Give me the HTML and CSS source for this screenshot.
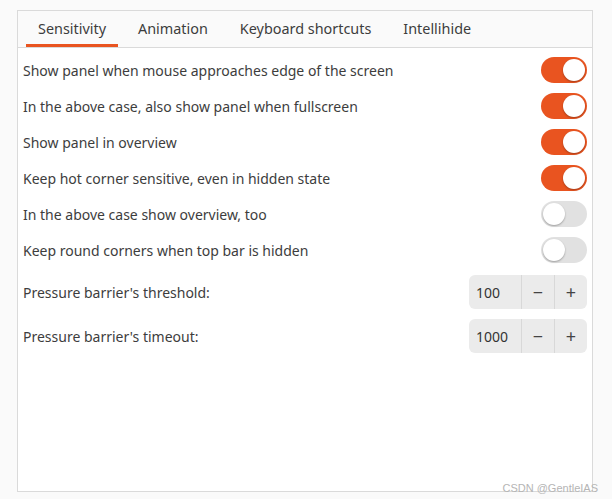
FILE: index.html
```
<!DOCTYPE html>
<html>
<head>
<meta charset="utf-8">
<link rel="stylesheet" href="styles.css">
</head>
<body>
<div class="frame">
  <div class="tabs">
    <div class="tab active">Sensitivity</div>
    <div class="tab">Animation</div>
    <div class="tab">Keyboard shortcuts</div>
    <div class="tab">Intellihide</div>
  </div>
  <div class="content">
    <div class="row"><span class="label">Show panel when mouse approaches edge of the screen</span><span class="switch on"><span class="knob"></span></span></div>
    <div class="row"><span class="label">In the above case, also show panel when fullscreen</span><span class="switch on"><span class="knob"></span></span></div>
    <div class="row"><span class="label">Show panel in overview</span><span class="switch on"><span class="knob"></span></span></div>
    <div class="row"><span class="label">Keep hot corner sensitive, even in hidden state</span><span class="switch on"><span class="knob"></span></span></div>
    <div class="row"><span class="label">In the above case show overview, too</span><span class="switch"><span class="knob"></span></span></div>
    <div class="row"><span class="label">Keep round corners when top bar is hidden</span><span class="switch"><span class="knob"></span></span></div>
    <div class="row spinrow first"><span class="label">Pressure barrier's threshold:</span>
      <div class="spin"><span class="value">100</span><span class="btn">−</span><span class="btn">+</span></div></div>
    <div class="row spinrow"><span class="label">Pressure barrier's timeout:</span>
      <div class="spin"><span class="value">1000</span><span class="btn">−</span><span class="btn">+</span></div></div>
  </div>
</div>
<div class="watermark">CSDN @GentleIAS</div>
</body>
</html>
```
FILE: styles.css
```
html, body {
  margin: 0;
  padding: 0;
  background: #fafafa;
  font-family: "Noto Sans", "Open Sans", sans-serif;
  color: #3d3d3d;
}
body {
  width: 612px;
  height: 499px;
  position: relative;
  overflow: hidden;
}
.frame {
  position: relative;
  margin: 10px 0 0 17px;
  width: 574px;
  height: 480px;
  border: 1px solid #dadada;
  background: #ffffff;
  display: flex;
  flex-direction: column;
}
.tabs {
  display: flex;
  gap: 8px;
  padding: 0 8px;
  height: 36px;
  background: #fafafa;
  border-bottom: 1px solid #dadada;
  font-size: 14.4px;
}
.tab {
  padding: 0 12px;
  display: flex;
  align-items: center;
  box-sizing: border-box;
  border-bottom: 3px solid transparent;
  padding-top: 1px;
}
.tab.active {
  border-bottom-color: #e95420;
}
.content {
  padding: 4px 5px 0 5px;
  font-size: 14px;
}
.row {
  height: 36px;
  display: flex;
  align-items: center;
  justify-content: space-between;
}
.spinrow {
  height: 44px;
}
.spinrow.first {
  margin-top: 2px;
}
.switch {
  width: 46px;
  height: 26px;
  border-radius: 13px;
  background: #e1e1e1;
  position: relative;
  display: flex;
  align-items: center;
  padding: 0 2px;
  box-sizing: border-box;
}
.switch.on {
  background: #e95420;
  justify-content: flex-end;
}
.knob {
  width: 22px;
  height: 22px;
  border-radius: 50%;
  background: #ffffff;
  box-shadow: 0 1px 2px rgba(0,0,0,0.3);
}
.spin {
  display: flex;
  height: 34px;
  border-radius: 6px;
  background: #ebebeb;
  overflow: hidden;
}
.spin .value {
  width: 52px;
  box-sizing: border-box;
  padding-left: 7px;
  display: flex;
  align-items: center;
  font-size: 14px;
  color: #333;
}
.spin .btn {
  width: 33px;
  box-sizing: border-box;
  border-left: 1px solid #d8d8d8;
  display: flex;
  align-items: center;
  justify-content: center;
  font-size: 18px;
  color: #444;
}
.watermark {
  position: absolute;
  right: 14px;
  bottom: 5px;
  font-size: 11px;
  color: #b5b5b5;
  font-family: "Liberation Sans", sans-serif;
}
```
